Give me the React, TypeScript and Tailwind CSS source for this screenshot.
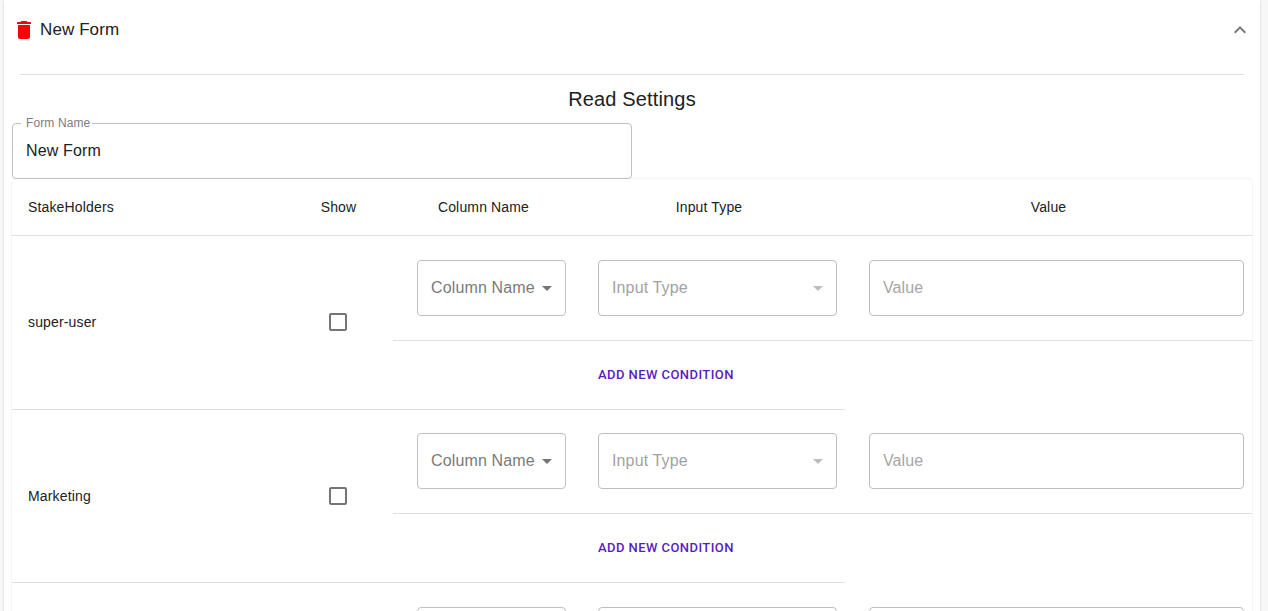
import React from "react";

const GRID = "grid grid-cols-[271px_111px_179px_272px_407px]";

function Arrow({ className }: { className: string }) {
  return (
    <svg viewBox="0 0 24 24" className={`h-6 w-6 shrink-0 ${className}`} fill="currentColor">
      <path d="M7 10l5 5 5-5z" />
    </svg>
  );
}

function SelectField({ label, disabled }: { label: string; disabled?: boolean }) {
  return (
    <div
      className={`flex h-14 items-center justify-between rounded-[4px] border pl-[13px] pr-[6px] ${
        disabled ? "border-[#bdbdbd]" : "border-[#c0c0c0]"
      }`}
    >
      <span
        className={`whitespace-nowrap pb-[2px] text-[16px] leading-[19px] tracking-[0.14px] ${
          disabled ? "text-[#a2a2a2]" : "text-[#7a7a7a]"
        }`}
      >
        {label}
      </span>
      <Arrow className={disabled ? "text-[#bdbdbd]" : "text-[#757575]"} />
    </div>
  );
}

interface Row {
  name: string;
  top: string;
  height: string;
  lift: string;
}

const rows: Row[] = [
  { name: "super-user", top: "pt-6", height: "h-[105px]", lift: "pb-[2px]" },
  { name: "Marketing", top: "pt-[23px]", height: "h-[104px]", lift: "pb-0" },
  { name: "Sales", top: "pt-6", height: "h-[105px]", lift: "pb-0" },
];

function StakeholderRow({ row }: { row: Row }) {
  return (
    <div className="flex">
      <div className={`flex w-[381px] items-center border-b border-[#e0e0e0] ${row.lift}`}>
        <div className="w-[271px] pl-4 text-[14px] leading-5 tracking-[0.15px]">{row.name}</div>
        <div className="flex w-[110px] justify-center">
          <svg viewBox="0 0 24 24" className="h-6 w-6 text-[#757575]" fill="currentColor">
            <path d="M19 5v14H5V5h14m0-2H5c-1.1 0-2 .9-2 2v14c0 1.1.9 2 2 2h14c1.1 0 2-.9 2-2V5c0-1.1-.9-2-2-2z" />
          </svg>
        </div>
      </div>
      <div className="w-[859px]">
        <div
          className={`grid grid-cols-[181px_271px_407px] border-b border-[#e0e0e0] ${row.top} ${row.height}`}
        >
          <div className="pl-6 pr-2">
            <SelectField label="Column Name" />
          </div>
          <div className="pl-6 pr-2">
            <SelectField label="Input Type" disabled />
          </div>
          <div className="pl-6 pr-2">
            <div className="flex h-14 items-center rounded-[4px] border border-[#bdbdbd] pb-[2px] pl-[13px] text-[16px] leading-[19px] tracking-[0.1px] text-[#a6a6a6]">
              Value
            </div>
          </div>
        </div>
        <div className="flex h-[69px] w-[452px] items-center border-b border-[#e0e0e0] pl-[205px]">
          <button className="whitespace-nowrap font-[Roboto,sans-serif] text-[13px] font-medium leading-[22px] tracking-[0.43px] text-[#5a1cc0]">
            ADD NEW CONDITION
          </button>
        </div>
      </div>
    </div>
  );
}

export default function App() {
  return (
    <div className="h-[611px] w-[1268px] overflow-hidden bg-[#f7f7f7] px-1 font-['Liberation_Sans',Arial,sans-serif] text-[#212121]">
      <div className="h-[640px] w-[1256px] bg-white px-2 shadow-[0_1px_2px_rgba(0,0,0,0.2)]">
        <div className="flex h-[74px] items-start justify-between pt-[18px]">
          <div className="flex items-center">
            <svg viewBox="0 0 24 24" className="h-6 w-6 text-[#ff0000]" fill="currentColor">
              <path d="M6 19c0 1.1.9 2 2 2h8c1.1 0 2-.9 2-2V7H6v12zM19 4h-3.500l-1-1h-5l-1 1H5v2h14V4z" />
            </svg>
            <span className="pl-1 text-[17px] leading-6 tracking-[0.1px]">New Form</span>
          </div>
          <svg viewBox="0 0 24 24" className="h-6 w-6 text-[#757575]" fill="currentColor">
            <path d="M12 8l-6 6 1.410 1.410L12 10.830l4.590 4.580L18 14z" />
          </svg>
        </div>
        <div className="mx-2 h-px bg-[#e0e0e0]" />
        <h2 className="h-12 pt-2 text-center text-[20px] font-normal leading-8 tracking-[0.15px]">
          Read Settings
        </h2>
        <div className="relative flex h-14 w-[620px] items-center rounded-[4px] border border-[#c0c0c0] pb-[2px] pl-[13px] text-[16px] leading-[19px] tracking-[0.15px]">
          <span className="absolute -top-[8px] left-[8px] bg-white pl-[5px] pr-[2px] text-[12px] leading-[14px] tracking-[0.11px] text-[#7d7d7d]">
            Form Name
          </span>
          New Form
        </div>
        <div className="w-[1240px] rounded-[4px] shadow-[0_0_2px_rgba(0,0,0,0.15)]">
          <div
            className={`${GRID} h-[57px] items-center border-b border-[#e0e0e0] text-center text-[14px] leading-6 tracking-[0.15px]`}
          >
            <div className="pl-4 text-left">StakeHolders</div>
            <div>Show</div>
            <div>Column Name</div>
            <div>Input Type</div>
            <div>Value</div>
          </div>
          {rows.map((row) => (
            <StakeholderRow key={row.name} row={row} />
          ))}
        </div>
      </div>
    </div>
  );
}
